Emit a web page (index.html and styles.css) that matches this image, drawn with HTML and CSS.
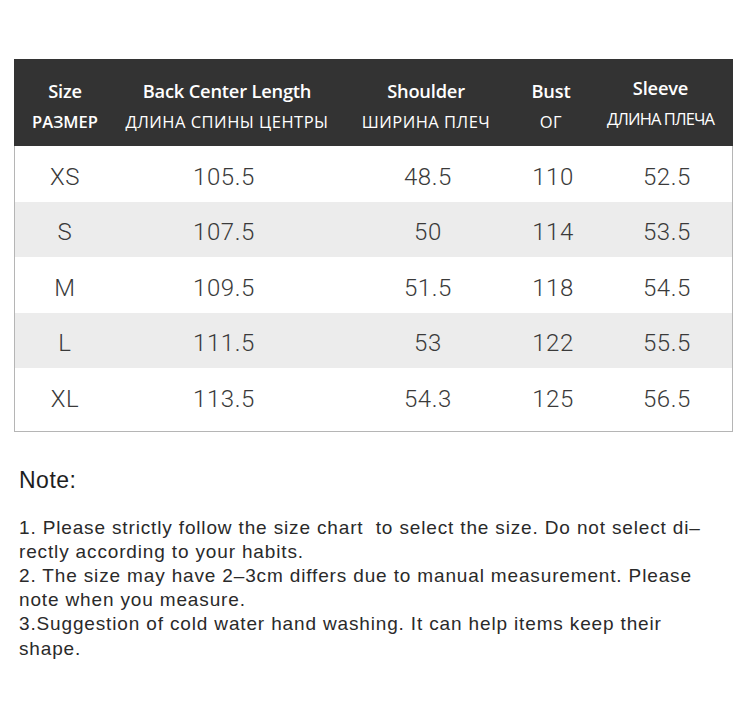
FILE: index.html
```html
<!DOCTYPE html>
<html>
<head>
<meta charset="utf-8">
<link rel="stylesheet" href="styles.css">
</head>
<body>
<div class="chart">
  <div class="head">
    <div class="hc c1"><span class="en">Size</span><span class="ru bold">РАЗМЕР</span></div>
    <div class="hc c2"><span class="en">Back Center Length</span><span class="ru">ДЛИНА СПИНЫ ЦЕНТРЫ</span></div>
    <div class="hc c3"><span class="en">Shoulder</span><span class="ru">ШИРИНА ПЛЕЧ</span></div>
    <div class="hc c4"><span class="en">Bust</span><span class="ru">ОГ</span></div>
    <div class="hc c5 up"><span class="en">Sleeve</span><span class="ru narrow">ДЛИНА ПЛЕЧА</span></div>
  </div>
  <div class="body">
    <div class="row"><span class="c1">XS</span><span class="c2">105.5</span><span class="c3">48.5</span><span class="c4">110</span><span class="c5">52.5</span></div>
    <div class="row alt"><span class="c1">S</span><span class="c2">107.5</span><span class="c3">50</span><span class="c4">114</span><span class="c5">53.5</span></div>
    <div class="row"><span class="c1">M</span><span class="c2">109.5</span><span class="c3">51.5</span><span class="c4">118</span><span class="c5">54.5</span></div>
    <div class="row alt"><span class="c1">L</span><span class="c2">111.5</span><span class="c3">53</span><span class="c4">122</span><span class="c5">55.5</span></div>
    <div class="row"><span class="c1">XL</span><span class="c2">113.5</span><span class="c3">54.3</span><span class="c4">125</span><span class="c5">56.5</span></div>
  </div>
</div>
<div class="note">
  <h2 class="note-title">Note:</h2>
  <p class="note-text">1. Please strictly follow the size chart&nbsp; to select the size. Do not select di–<br>rectly according to your habits.<br>2. The size may have 2–3cm differs due to manual measurement. Please<br>note when you measure.<br>3.Suggestion of cold water hand washing. It can help items keep their<br>shape.</p>
</div>
</body>
</html>
```

FILE: styles.css
```css
html, body {
  margin: 0;
  padding: 0;
  background: #ffffff;
}

body {
  width: 746px;
  height: 714px;
  overflow: hidden;
}

.chart {
  margin: 59px 0 0 14px;
  width: 719px;
  box-sizing: border-box;
}

.head {
  display: grid;
  grid-template-columns: 102px 222px 176px 74px 145px;
  height: 87px;
  background: #333333;
  color: #ffffff;
}

.hc {
  display: flex;
  flex-direction: column;
  align-items: center;
  padding-top: 19px;
  box-sizing: border-box;
}

.hc.up {
  padding-top: 16px;
}

.en {
  font-family: "Open Sans", "DejaVu Sans", sans-serif;
  font-weight: 600;
  font-size: 18.3px;
  line-height: 26px;
  letter-spacing: -0.2px;
}

.ru {
  font-family: "Open Sans", "DejaVu Sans", sans-serif;
  font-weight: 400;
  font-size: 16.5px;
  line-height: 20px;
  margin-top: 8px;
  letter-spacing: 0.5px;
}

.ru.bold {
  font-weight: 600;
  letter-spacing: 0;
}

.ru.narrow {
  letter-spacing: -0.9px;
}

.body {
  border: 1px solid #b5b5b5;
  border-top: none;
  padding-bottom: 7px;
}

.row {
  display: grid;
  grid-template-columns: 100px 218px 190px 60px 149px;
  height: 55.5px;
  align-items: center;
  padding-top: 6px;
  box-sizing: border-box;
  font-family: Roboto, "Liberation Sans", Arial, sans-serif;
  font-weight: 300;
  font-size: 24px;
  color: #3a3a3a;
  letter-spacing: 0.6px;
}

.row > span {
  text-align: center;
}

.row > .c5 {
  padding-left: 19px;
}

.row.alt {
  background: #ececec;
}

.note {
  padding: 0 0 0 19px;
}

.note-title {
  margin: 34px 0 0 0;
  font-family: "Liberation Sans", Arial, sans-serif;
  font-weight: 400;
  font-size: 23px;
  line-height: 28px;
  color: #1e1e1e;
  letter-spacing: 0.5px;
}

.note-text {
  margin: 22px 0 0 0;
  font-family: "Liberation Sans", Arial, sans-serif;
  font-size: 19px;
  line-height: 24.2px;
  color: #2a2a2a;
  letter-spacing: 0.85px;
}
```
